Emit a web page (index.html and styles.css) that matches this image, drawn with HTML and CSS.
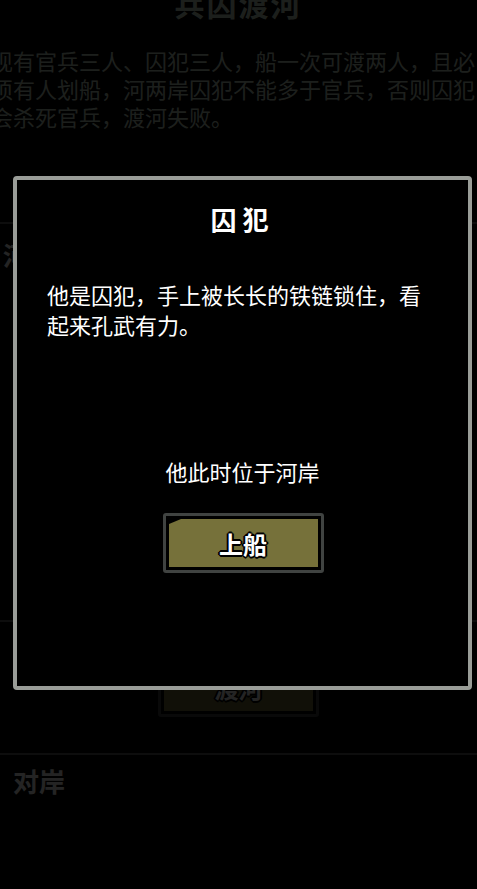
FILE: index.html
```html
<!DOCTYPE html>
<html lang="zh-CN">
    <head>
        <meta charset="UTF-8" />
        <meta name="viewport" content="width=device-width, initial-scale=1.0" />
        <title>兵囚渡河</title>
        <link rel="stylesheet" href="styles.css">
    </head>
    <body>
        <div class="page">
            <h1 class="title">兵囚渡河</h1>
            <p class="rules">现有官兵三人、囚犯三人，船一次可渡两人，且必须有人划船，河两岸囚犯不能多于官兵，否则囚犯会杀死官兵，渡河失败。</p>

            <section class="bank near">
                <h2 class="bank-name">河岸</h2>
            </section>

            <div class="cross">
                <button class="btn">渡河</button>
            </div>

            <section class="bank far">
                <h2 class="bank-name">对岸</h2>
            </section>
        </div>

        <div class="mask"></div>

        <div class="dialog">
            <h3 class="dialog-title">囚犯</h3>
            <p class="dialog-desc">他是囚犯，手上被长长的铁链锁住，看起来孔武有力。</p>
            <p class="dialog-state">他此时位于河岸</p>
            <button class="btn btn-big">上船</button>
        </div>
    </body>
</html>
```

FILE: styles.css
```css
* {
    box-sizing: border-box;
}
body {
    margin: 0;
    background: #000;
    color: #c8dcc8;
    font-family: "Noto Sans CJK SC", "Noto Sans", sans-serif;
    overflow: hidden;
    height: 889px;
}
.page {
    display: flex;
    flex-direction: column;
}
.title {
    margin: -15px 0 0;
    text-align: center;
    font-size: 30px;
    line-height: 36px;
    letter-spacing: 2px;
    font-weight: bold;
}
.rules {
    margin: 25px 0 0 -9px;
    width: 495px;
    font-size: 22px;
    line-height: 28px;
}
.bank {
    border-top: 2px solid #5a605a;
}
.bank-name {
    margin: 0;
    font-size: 26px;
    line-height: 34px;
    font-weight: bold;
    color: #fff;
}
.near {
    margin-top: 92px;
    height: 400px;
    border-bottom: 2px solid #5a605a;
    padding: 14px 0 0 3px;
}
.cross {
    display: flex;
    justify-content: center;
    padding: 35px 0 36px;
}
.far {
    padding: 9px 0 0 13px;
}

.btn {
    position: relative;
    width: 161px;
    height: 60px;
    border: 3px solid #404341;
    border-radius: 3px;
    background: #76713a;
    box-shadow: inset 0 0 0 3px #000;
    color: #fff;
    font-family: inherit;
    font-size: 24px;
    font-weight: bold;
    text-shadow: -2px 0 #000, 2px 0 #000, 0 -2px #000, 0 2px #000, -1px -1px #000, 1px 1px #000, -1px 1px #000, 1px -1px #000;
    cursor: pointer;
}
/* little cut on the top-left corner of the fill */
.btn::before {
    content: "";
    position: absolute;
    top: 3px;
    left: 3px;
    border-top: 5px solid #000;
    border-right: 12px solid transparent;
}

.mask {
    position: fixed;
    inset: 0;
    background: rgba(0, 0, 0, 0.86);
}
.dialog {
    position: fixed;
    left: 13px;
    top: 176px;
    width: 459px;
    height: 514px;
    border: 4px solid #9a9d98;
    border-radius: 4px;
    background: #000;
    color: #fff;
    display: flex;
    flex-direction: column;
    align-items: center;
    padding: 24px 30px 0;
}
.dialog-title {
    margin: 0;
    font-size: 26px;
    line-height: 30px;
    letter-spacing: 6px;
    font-weight: bold;
}
.dialog-desc {
    margin: 45px 0 0;
    width: 100%;
    font-size: 22px;
    line-height: 30px;
}
.dialog-state {
    margin: 117px 0 0;
    font-size: 22px;
    line-height: 30px;
}
.btn-big {
    margin-top: 27px;
    margin-left: 1px;
}
```
